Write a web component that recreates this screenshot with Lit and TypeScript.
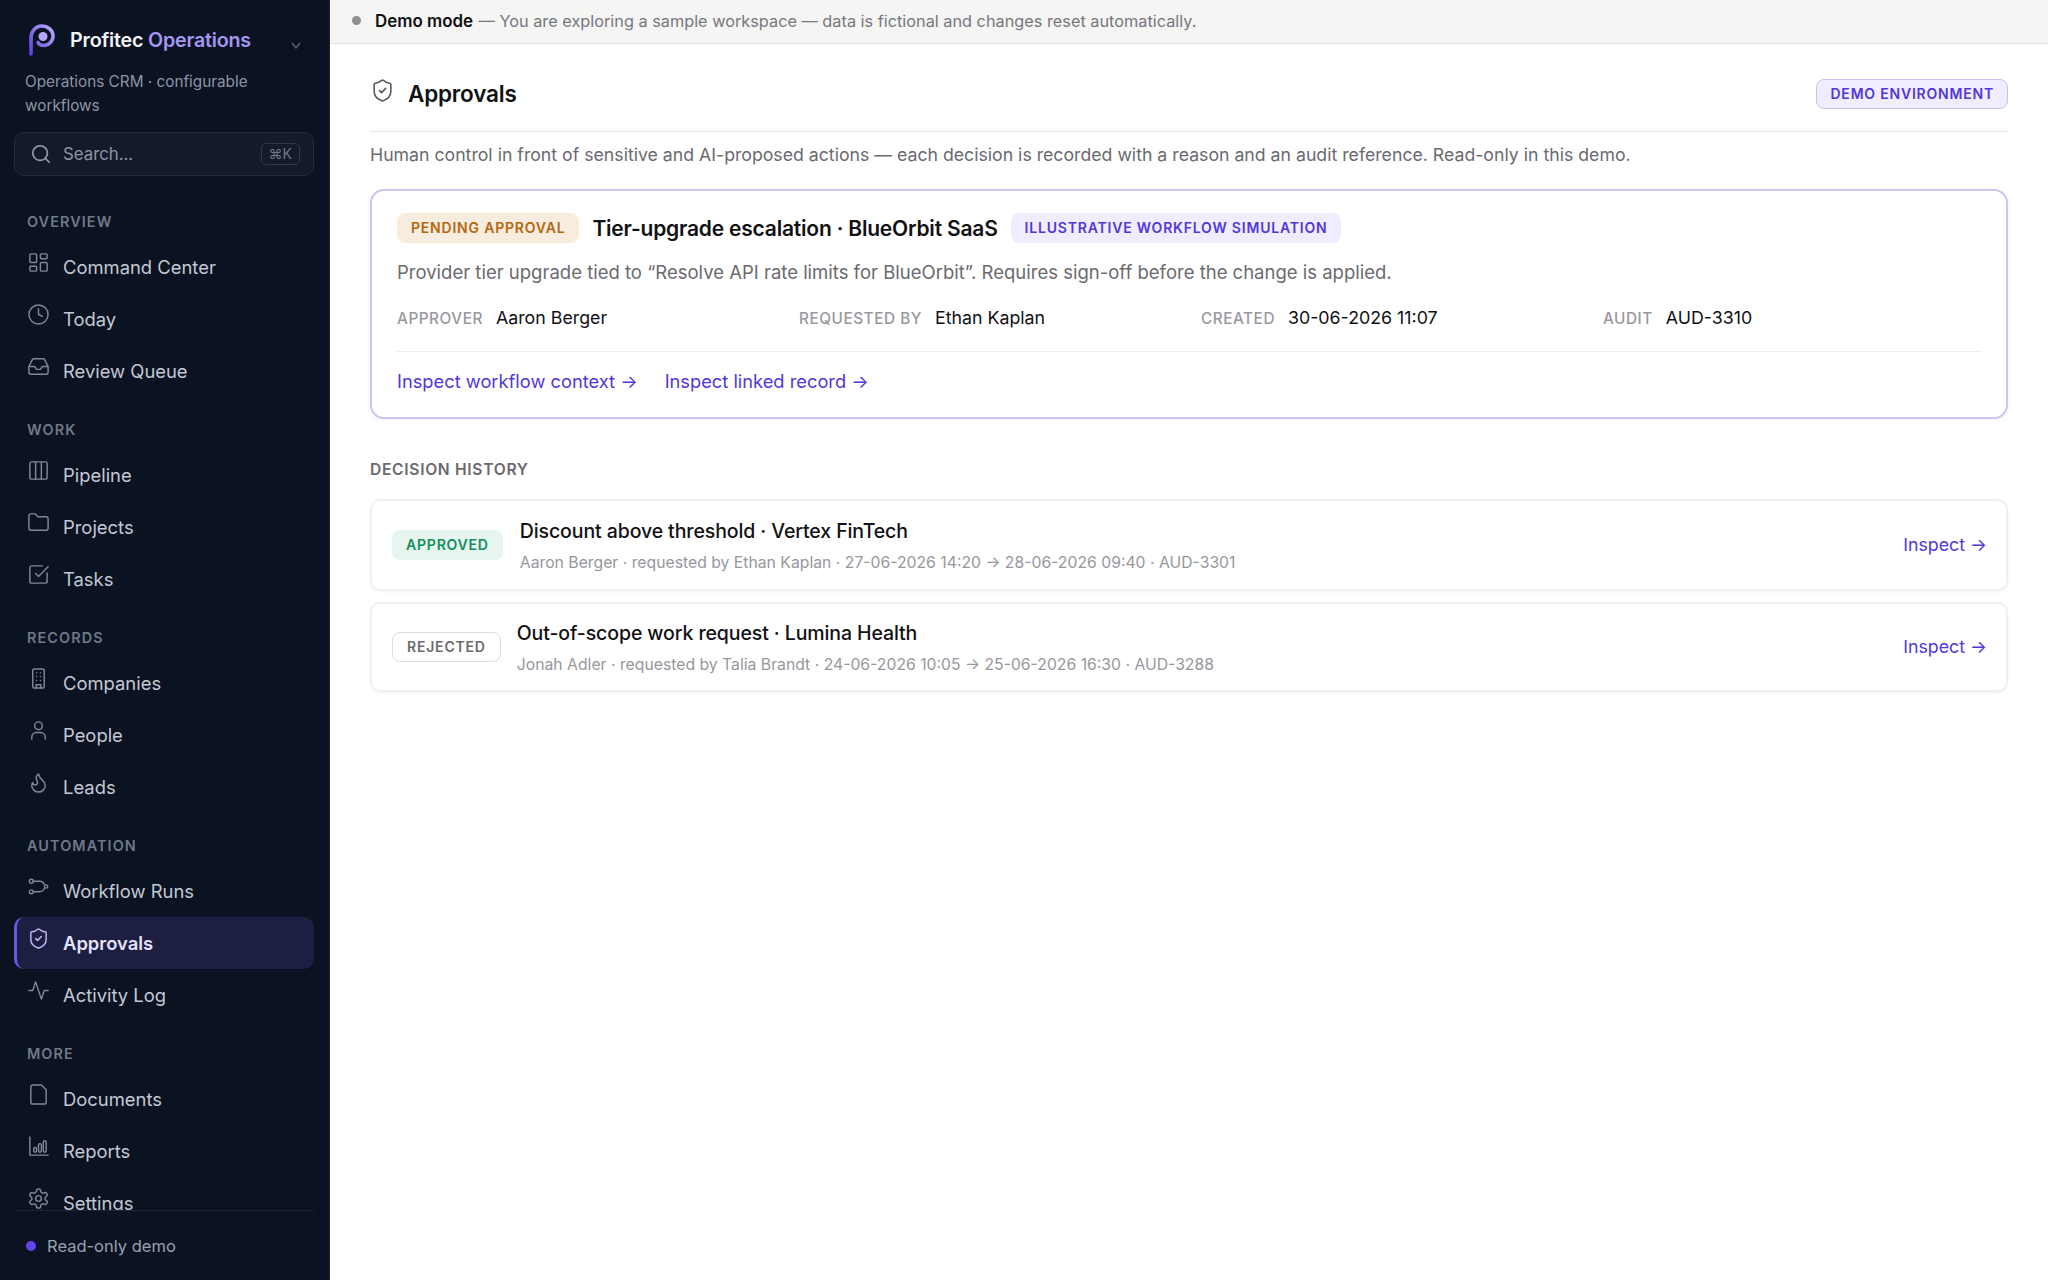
import { LitElement, html, css, svg } from 'lit';
import { customElement } from 'lit/decorators.js';

const ICONS: Record<string, unknown> = {
  grid: svg`<rect x="3" y="3" width="7" height="9" rx="1"/><rect x="14" y="3" width="7" height="5" rx="1"/><rect x="14" y="12" width="7" height="9" rx="1"/><rect x="3" y="16" width="7" height="5" rx="1"/>`,
  clock: svg`<circle cx="12" cy="12" r="10"/><path d="M12 6v6l4 2"/>`,
  inbox: svg`<path d="M22 12h-6l-2 3h-4l-2-3H2"/><path d="M5.45 5.11 2 12v6a2 2 0 0 0 2 2h16a2 2 0 0 0 2-2v-6l-3.45-6.89A2 2 0 0 0 16.76 4H7.24a2 2 0 0 0-1.79 1.11z"/>`,
  columns: svg`<rect x="3" y="3" width="18" height="18" rx="2"/><path d="M9 3v18M15 3v18"/>`,
  folder: svg`<path d="M20 20a2 2 0 0 0 2-2V8a2 2 0 0 0-2-2h-7.9a2 2 0 0 1-1.69-.9L9.6 3.9A2 2 0 0 0 7.93 3H4a2 2 0 0 0-2 2v13a2 2 0 0 0 2 2Z"/>`,
  check: svg`<path d="M21 10.5V19a2 2 0 0 1-2 2H5a2 2 0 0 1-2-2V5a2 2 0 0 1 2-2h11"/><path d="m9 11 3 3L22 4"/>`,
  building: svg`<rect x="6" y="2" width="12" height="20" rx="1.5"/><path d="M9.5 22v-3.5h5V22M10 6h.01M14 6h.01M10 10h.01M14 10h.01M10 14h.01M14 14h.01"/>`,
  user: svg`<circle cx="12" cy="7" r="4"/><path d="M5 21v-2a5 5 0 0 1 5-5h4a5 5 0 0 1 5 5v2"/>`,
  flame: svg`<path d="M8.5 14.5A2.5 2.5 0 0 0 11 12c0-1.38-.5-2-1-3-1.07-2.14-.22-4.05 2-6 .5 2.5 2 4.9 4 6.5 2 1.6 3 3.5 3 5.5a7 7 0 1 1-14 0c0-1.15.43-2.29 1-3a2.5 2.5 0 0 0 2.5 2.5z"/>`,
  route: svg`<circle cx="4.5" cy="6.5" r="2"/><circle cx="4.5" cy="17.5" r="2"/><circle cx="20" cy="12" r="1.7"/><path d="M6.5 6.5H13a5.5 5.5 0 0 1 5.2 3.8M18.2 13.7a5.5 5.5 0 0 1-5.2 3.8H6.5"/>`,
  shield: svg`<path d="M20 13c0 5-3.5 7.5-7.66 8.95a1 1 0 0 1-.67-.01C7.5 20.5 4 18 4 13V6a1 1 0 0 1 1-1c2 0 4.5-1.2 6.24-2.72a1.17 1.17 0 0 1 1.52 0C14.51 3.81 17 5 19 5a1 1 0 0 1 1 1z"/><path d="m9 12 2 2 4-4"/>`,
  activity: svg`<path d="M22 12h-4l-3 9L9 3l-3 9H2"/>`,
  file: svg`<path d="M15 2H6a2 2 0 0 0-2 2v16a2 2 0 0 0 2 2h12a2 2 0 0 0 2-2V7Z"/>`,
  chart: svg`<path d="M3 2v19h19"/><rect x="7" y="13" width="3" height="5" rx="1.5"/><rect x="12" y="9" width="3" height="9" rx="1.5"/><rect x="17" y="6" width="3" height="12" rx="1.5"/>`,
  gear: svg`<path d="M12.22 2h-.44a2 2 0 0 0-2 2v.18a2 2 0 0 1-1 1.73l-.43.25a2 2 0 0 1-2 0l-.15-.08a2 2 0 0 0-2.73.73l-.22.38a2 2 0 0 0 .73 2.73l.15.1a2 2 0 0 1 1 1.72v.51a2 2 0 0 1-1 1.74l-.15.09a2 2 0 0 0-.73 2.73l.22.38a2 2 0 0 0 2.73.73l.15-.08a2 2 0 0 1 2 0l.43.25a2 2 0 0 1 1 1.73V20a2 2 0 0 0 2 2h.44a2 2 0 0 0 2-2v-.18a2 2 0 0 1 1-1.73l.43-.25a2 2 0 0 1 2 0l.15.08a2 2 0 0 0 2.73-.73l.22-.39a2 2 0 0 0-.73-2.73l-.15-.08a2 2 0 0 1-1-1.74v-.5a2 2 0 0 1 1-1.74l.15-.09a2 2 0 0 0 .73-2.73l-.22-.38a2 2 0 0 0-2.73-.73l-.15.08a2 2 0 0 1-2 0l-.43-.25a2 2 0 0 1-1-1.73V4a2 2 0 0 0-2-2z"/><circle cx="12" cy="12" r="3"/>`,
};

const NAV = [
  { title: 'Overview', items: [['Command Center', 'grid'], ['Today', 'clock'], ['Review Queue', 'inbox']] },
  { title: 'Work', items: [['Pipeline', 'columns'], ['Projects', 'folder'], ['Tasks', 'check']] },
  { title: 'Records', items: [['Companies', 'building'], ['People', 'user'], ['Leads', 'flame']] },
  { title: 'Automation', items: [['Workflow Runs', 'route'], ['Approvals', 'shield'], ['Activity Log', 'activity']] },
  { title: 'More', items: [['Documents', 'file'], ['Reports', 'chart'], ['Settings', 'gear']] },
];

const icon = (name: string, cls = 'ico') =>
  html`<svg class=${cls} viewBox="0 0 24 24" fill="none" stroke="currentColor" stroke-width="1.5" stroke-linecap="round" stroke-linejoin="round">${ICONS[name]}</svg>`;

@customElement('app-root')
export class AppRoot extends LitElement {
  static styles = css`
    :host {
      display: flex;
      width: 2048px;
      height: 1280px;
      overflow: hidden;
      font-family: Inter, 'Liberation Sans', sans-serif;
      color: #111114;
      background: #fff;
    }
    * { box-sizing: border-box; }

    .side {
      width: 330px;
      flex: none;
      background: #0b1221;
      display: flex;
      flex-direction: column;
      border-right: 1px solid #1c2433;
    }
    .brand {
      display: flex;
      align-items: flex-start;
      padding: 24px 27px 0 28px;
      height: 67px;
    }
    .brand svg.logo { width: 28px; height: 32px; flex: none; }
    .brand .name {
      margin-left: 14px;
      margin-top: 4px;
      font-size: 19.7px;
      line-height: 24px;
      font-weight: 600;
      letter-spacing: -0.2px;
      color: #f3f4f8;
      white-space: nowrap;
    }
    .brand .name span { color: #a596ef; }
    .brand .chev { margin-left: auto; margin-top: 15px; width: 12px; height: 12px; color: #5f6879; }
    .tag {
      padding: 0 25px;
      font-size: 15.3px;
      line-height: 24px;
      color: #8d95a5;
      margin-top: 3px;
      height: 48px;
    }
    .search {
      margin: 14px 15px 0 14px;
      height: 44px;
      border: 1px solid #232b3c;
      border-radius: 10px;
      background: #131a29;
      display: flex;
      align-items: center;
      padding: 0 13px 0 15px;
      font-size: 16.8px;
      color: #8d95a5;
    }
    .search svg { width: 22px; height: 22px; margin-right: 11px; color: #939bab; flex: none; }
    .search .kbd {
      margin-left: auto;
      border: 1px solid #2f3849;
      border-radius: 5px;
      font-size: 14px;
      line-height: 20px;
      padding: 0 7px;
      color: #6f7889;
    }
    .nav {
      flex: 1;
      min-height: 0;
      overflow: hidden;
      padding: 36px 15px 0 14px;
    }
    .sec { margin-bottom: 23px; }
    .sec h3 {
      margin: 0 0 9px;
      padding-left: 13px;
      font-size: 14.4px;
      line-height: 20px;
      font-weight: 600;
      letter-spacing: 1.1px;
      text-transform: uppercase;
      color: #707989;
    }
    .item {
      display: flex;
      height: 52px;
      align-items: center;
      padding-left: 13px;
      font-size: 18.4px;
      color: #c3c9d4;
      border-radius: 10px;
      white-space: nowrap;
    }
    .item .ico {
      width: 23px;
      height: 23px;
      margin-right: 13px;
      margin-top: -10px;
      color: #7f8899;
      flex: none;
    }
    .item.on {
      background: #1d1f42;
      color: #e4e1fb;
      font-weight: 600;
      border-left: 3px solid #6d55e6;
      padding-left: 10px;
    }
    .item.on .ico { color: #c3baf7; }
    .foot {
      height: 70px;
      flex: none;
      margin: 0 15px;
      border-top: 1px solid #1d2534;
      display: flex;
      align-items: center;
      padding-left: 11px;
      font-size: 16.5px;
      color: #99a1b0;
    }
    .foot i {
      width: 10px;
      height: 10px;
      border-radius: 50%;
      background: #6544ee;
      margin-right: 11px;
    }

    .main { flex: 1; min-width: 0; display: flex; flex-direction: column; }
    .banner {
      height: 44px;
      flex: none;
      background: #f5f5f4;
      border-bottom: 1px solid #e2e2e2;
      display: flex;
      align-items: center;
      padding: 0 0 2px 22px;
      font-size: 16.3px;
      color: #77777d;
      white-space: pre;
    }
    .banner i {
      width: 9px;
      height: 9px;
      border-radius: 50%;
      background: #8e8e92;
      margin-right: 14px;
    }
    .banner b { font-size: 16.9px; font-weight: 600; color: #111114; margin-right: 1px; }

    .page { padding: 0 40px; }
    .head {
      height: 88px;
      padding-top: 12px;
      display: flex;
      align-items: center;
      border-bottom: 1px solid #e8e8ea;
    }
    .head .ico { width: 25px; height: 25px; color: #55555b; margin-top: -6px; margin-right: 13px; }
    .head h1 { margin: 0; font-size: 22.5px; font-weight: 600; letter-spacing: -0.2px; }
    .pill {
      font-size: 14px;
      font-weight: 600;
      letter-spacing: 0.8px;
      text-transform: uppercase;
      border-radius: 8px;
      white-space: nowrap;
    }
    .env {
      margin-left: auto;
      height: 30px;
      line-height: 27px;
      padding: 0 13px;
      background: #f0edfe;
      border: 1.5px solid #c8c0f4;
      color: #5237d8;
    }
    .desc { margin: 11px 0 0; font-size: 17.7px; line-height: 24px; color: #6a6a70; }

    .card {
      margin-top: 22px;
      height: 230px;
      border: 2px solid #cbc5f3;
      border-radius: 14px;
      padding: 22px 25px 0;
      box-shadow: 0 1px 3px rgba(60, 50, 140, 0.08);
    }
    .top { display: flex; align-items: center; height: 30px; }
    .top h2 { margin: 0 13px; font-size: 21px; font-weight: 600; letter-spacing: -0.2px; white-space: nowrap; }
    .pending { height: 30px; line-height: 30px; padding: 0 14px; background: #f8ecdf; color: #b5660f; }
    .sim { height: 30px; line-height: 30px; padding: 0 14px; background: #f0edfe; color: #5237d8; }
    .reason { margin: 17px 0 0; font-size: 18.5px; line-height: 24px; color: #6a6a70; white-space: nowrap; }
    .meta {
      display: grid;
      grid-template-columns: repeat(4, 1fr);
      column-gap: 24px;
      margin-top: 22px;
      height: 46px;
      border-bottom: 1px solid #eeeeef;
      font-size: 17.8px;
      line-height: 24px;
    }
    .meta span { font-size: 15.3px; font-weight: 500; letter-spacing: 0.55px; color: #98989e; text-transform: uppercase; margin-right: 13px; }
    .links { display: flex; gap: 27px; margin-top: 15px; font-size: 18.3px; line-height: 28px; color: #5237d8; }

    h4 { margin: 39px 0 0; font-size: 15.6px; line-height: 24px; font-weight: 600; letter-spacing: 0.7px; text-transform: uppercase; color: #69696f; }
    .row {
      display: flex;
      align-items: center;
      padding: 0 19px 0 20px;
      border: 2px solid #f0f0f1;
      border-radius: 10px;
      box-shadow: 0 1px 3px rgba(0, 0, 0, 0.05);
    }
    .row.a { height: 92px; margin-top: 17px; }
    .row.b { height: 90px; margin-top: 11px; }
    .row strong { display: block; font-size: 19.5px; line-height: 26px; font-weight: 500; letter-spacing: -0.1px; margin-top: 2px; }
    .row small { display: block; font-size: 15.75px; line-height: 22px; color: #97979d; margin-top: 8px; }
    .st { height: 30px; line-height: 30px; padding: 0 14px; margin-right: 17px; flex: none; }
    .ok { background: #e7f5ef; color: #0f8f60; }
    .no { background: #fff; border: 1.5px solid #dcdcde; color: #6b6b71; line-height: 27px; padding: 0 14px; margin-right: 16px; }
    .ins { margin-left: auto; font-size: 17.8px; color: #5237d8; white-space: nowrap; margin-top: -1px; }
  `;

  render() {
    return html`
      <aside class="side">
        <div class="brand">
          <svg class="logo" viewBox="0 0 28 32" fill="none">
            <defs>
              <linearGradient id="lg" x1="0" y1="1" x2="1" y2="0">
                <stop offset="0" stop-color="#5f3fe0"/><stop offset="1" stop-color="#b9abf8"/>
              </linearGradient>
            </defs>
            <path d="M3 30V14C3 7 8 2 13.5 2 20 2 25 6.5 25 12c0 5.5-4.500 9.500-9.500 9.500-2.500 0-4.500-1-5.500-3" stroke="url(#lg)" stroke-width="3.6" stroke-linecap="round"/>
            <circle cx="15" cy="12.500" r="4.500" fill="#b5a6f5"/>
          </svg>
          <div class="name">Profitec <span>Operations</span></div>
          <svg class="chev" viewBox="0 0 12 12" fill="none" stroke="currentColor" stroke-width="1.3"><path d="M2 4l4 5 4-5"/></svg>
        </div>
        <div class="tag">Operations CRM · configurable workflows</div>
        <div class="search">
          <svg viewBox="0 0 24 24" fill="none" stroke="currentColor" stroke-width="1.8" stroke-linecap="round"><circle cx="11" cy="11" r="8"/><path d="m21 21-4.300-4.300"/></svg>
          Search...
          <span class="kbd">⌘K</span>
        </div>
        <nav class="nav">
          ${NAV.map(
            (s) => html`<div class="sec">
              <h3>${s.title}</h3>
              ${s.items.map(
                ([label, ic]) => html`<div class="item ${label === 'Approvals' ? 'on' : ''}">${icon(ic)}${label}</div>`
              )}
            </div>`
          )}
        </nav>
        <div class="foot"><i></i>Read-only demo</div>
      </aside>
      <main class="main">
        <div class="banner"><i></i><b>Demo mode</b> — You are exploring a sample workspace — data is fictional and changes reset automatically.</div>
        <div class="page">
          <div class="head">
            ${icon('shield')}
            <h1>Approvals</h1>
            <div class="pill env">Demo environment</div>
          </div>
          <p class="desc">Human control in front of sensitive and AI-proposed actions — each decision is recorded with a reason and an audit reference. Read-only in this demo.</p>
          <section class="card">
            <div class="top">
              <div class="pill pending">Pending approval</div>
              <h2>Tier-upgrade escalation · BlueOrbit SaaS</h2>
              <div class="pill sim">Illustrative workflow simulation</div>
            </div>
            <p class="reason">Provider tier upgrade tied to “Resolve API rate limits for BlueOrbit”. Requires sign-off before the change is applied.</p>
            <div class="meta">
              <div><span>Approver</span>Aaron Berger</div>
              <div><span>Requested by</span>Ethan Kaplan</div>
              <div><span>Created</span>30-06-2026 11:07</div>
              <div><span>Audit</span>AUD-3310</div>
            </div>
            <div class="links"><div>Inspect workflow context →</div><div>Inspect linked record →</div></div>
          </section>
          <h4>Decision history</h4>
          <div class="row a">
            <div class="pill st ok">Approved</div>
            <div>
              <strong>Discount above threshold · Vertex FinTech</strong>
              <small>Aaron Berger · requested by Ethan Kaplan · 27-06-2026 14:20 → 28-06-2026 09:40 · AUD-3301</small>
            </div>
            <div class="ins">Inspect →</div>
          </div>
          <div class="row b">
            <div class="pill st no">Rejected</div>
            <div>
              <strong>Out-of-scope work request · Lumina Health</strong>
              <small>Jonah Adler · requested by Talia Brandt · 24-06-2026 10:05 → 25-06-2026 16:30 · AUD-3288</small>
            </div>
            <div class="ins">Inspect →</div>
          </div>
        </div>
      </main>
    `;
  }
}
